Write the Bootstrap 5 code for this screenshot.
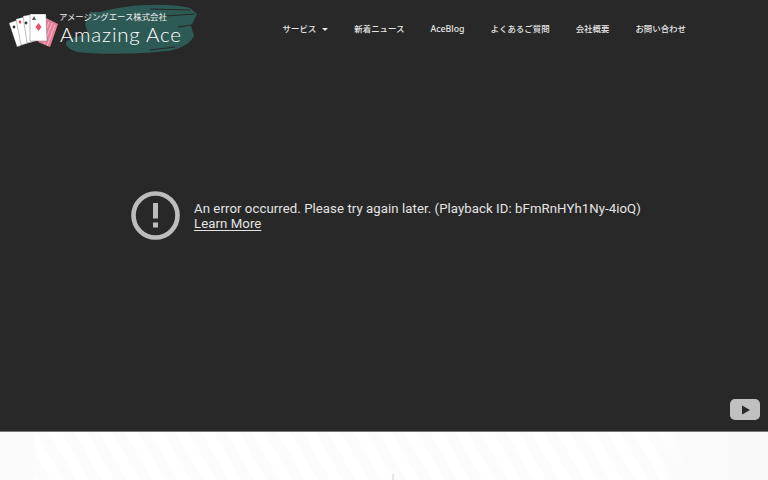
<!DOCTYPE html>
<html lang="ja">
<head>
<meta charset="utf-8">
<title>Amazing Ace</title>
<link href="https://cdn.jsdelivr.net/npm/bootstrap@5.3.0/dist/css/bootstrap.min.css" rel="stylesheet">
<style>
html,body{height:480px;overflow:hidden;background:#fff}
.stage{height:432px;background:#282828;border-bottom:1px solid #777}
.topbar{left:0;top:0;width:100%;height:56px}
.brand-art{display:block;width:200px;height:56px}
.site-links{font-family:"Noto Sans CJK JP","Noto Sans",sans-serif;font-size:8.45px;font-weight:500;color:#e6e6e6;padding-right:82px;gap:26px}
.site-links a{color:#e6e6e6;text-decoration:none;line-height:12px;white-space:nowrap}
.site-links .latin{font-family:"Noto Sans",sans-serif;font-size:8.8px}
.caret-mark{display:inline-block;width:0;height:0;border-left:3px solid transparent;border-right:3px solid transparent;border-top:3px solid #e6e6e6;margin-left:6px;vertical-align:1px}
.err-wrap{height:431px;padding-left:131px;gap:14px}
.err-icon{width:49px;height:49px;flex:none}
.err-text{font-family:Roboto,sans-serif;font-size:13.2px;letter-spacing:.07px;line-height:15px;color:#e4e4e4;white-space:nowrap;padding-top:1px}
.err-text a{color:#e4e4e4;text-decoration:underline;text-underline-offset:2px}
.yt-mark{right:8px;top:399px;width:30px;height:21px}
.lower{height:48px;position:relative;overflow:hidden;background:
 linear-gradient(90deg,#fafbfa 0,#fafbfa 33px,transparent 37px),
 linear-gradient(90deg,transparent 655px,#f9faf9 690px,#f8f9f8 768px),
 repeating-linear-gradient(60deg,#fff 0,#fff 11px,#fbfcfb 11px,#fbfcfb 22px)}
.tick{left:392px;top:42px;width:2px;height:6px;background:#e6e6e6}
</style>
</head>
<body>
<section class="stage position-relative">
  <header class="topbar position-absolute d-flex align-items-center justify-content-between">
    <svg class="brand-art" viewBox="0 0 200 56" role="img" aria-label="Amazing Ace">
      <path d="M100 12C125 5 165 2 190 8l7 6-6 12 3 10c-4 8-14 13-26 15-30 3-70 4-90 1-8-2-13-6-12-10 6-5 14-6 22-8l-3-10 5-12z" fill="#2e5a55"/>
      <path d="M150 9l40 1M165 16l30-2M178 27l14-2M150 50l25-3" stroke="#282828" stroke-width="1.2" fill="none"/>
      <polygon points="46,18 58,24 50,47 38,42" fill="#e8809c"/>
      <g stroke="#f6c2cf" stroke-width=".8"><path d="M49 22l-8 20M52 23l-8 21M55 25l-8 21"/></g>
      <g stroke="#222" stroke-width=".3" fill="#fff">
        <polygon points="9,23 20,19 28,43 17,47"/>
        <polygon points="16,19 28,16 33,42 21,45"/>
        <polygon points="23,16 34,14 37,41 27,43"/>
        <polygon points="30,14 46,14 47,41 30,41"/>
      </g>
      <g fill="#333">
        <circle cx="14" cy="27" r="1.4"/><circle cx="26" cy="23" r="1.4"/>
        <path d="M32 20l2-4 2 4z" fill="#555"/>
      </g>
      <path d="M20 20l1.4 2-1.4 2-1.4-2z" fill="#e33"/>
      <path d="M38.5 23l3 4-3 4-3-4z" fill="#e8506e"/>
      <text x="59" y="19.5" font-family="'Noto Sans CJK JP',sans-serif" font-size="8.4" fill="#f0f0f0">アメージングエース株式会社</text>
      <text x="60" y="42" font-family="Lato,sans-serif" font-weight="300" font-size="20.5" letter-spacing=".75" fill="#fff">Amazing Ace</text>
    </svg>
    <nav class="site-links d-flex align-items-baseline">
      <a href="#">サービス<span class="caret-mark"></span></a>
      <a href="#">新着ニュース</a>
      <a href="#" class="latin">AceBlog</a>
      <a href="#">よくあるご質問</a>
      <a href="#">会社概要</a>
      <a href="#">お問い合わせ</a>
    </nav>
  </header>
  <div class="err-wrap d-flex align-items-center">
    <svg class="err-icon" viewBox="0 0 49 49" aria-hidden="true">
      <circle cx="24.5" cy="24.5" r="22" fill="none" stroke="#bdbdbd" stroke-width="4.6"/>
      <rect x="22" y="12" width="5" height="15.5" fill="#bdbdbd"/>
      <rect x="22" y="31.5" width="5" height="5" fill="#bdbdbd"/>
    </svg>
    <div class="err-text">An error occurred. Please try again later. (Playback ID: bFmRnHYh1Ny-4ioQ)<br><a href="#">Learn More</a></div>
  </div>
  <svg class="yt-mark position-absolute" viewBox="0 0 30 21" aria-label="YouTube">
    <rect width="30" height="21" rx="5" fill="#c0c0c0"/>
    <path d="M12 6.5l8 4.5-8 4.5z" fill="#282828"/>
  </svg>
</section>
<section class="lower"><span class="tick position-absolute"></span></section>
<script src="https://cdn.jsdelivr.net/npm/bootstrap@5.3.0/dist/js/bootstrap.bundle.min.js"></script>
</body>
</html>
